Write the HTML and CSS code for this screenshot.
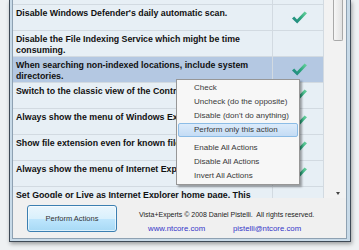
FILE: index.html
```html
<!DOCTYPE html>
<html lang="en">
<head>
  <meta charset="UTF-8">
  <title>Vista Experts</title>
  <link rel="stylesheet" href="styles.css">
</head>
<body>

  <svg width="0" height="0" class="defs">
    <defs>
      <linearGradient id="tick" x1="0" y1="1" x2="1" y2="0">
        <stop offset="0" stop-color="#1f7f86"/>
        <stop offset="0.5" stop-color="#2aa37c"/>
        <stop offset="1" stop-color="#6fd8a0"/>
      </linearGradient>
      <symbol id="check" viewBox="0 0 15 13">
        <polygon points="0,7.5 2.2,5.6 5,8.4 12.6,0.4 15,2.2 5.2,12.6" fill="url(#tick)"/>
      </symbol>
    </defs>
  </svg>

  <div class="window">
    <div class="client">

      <!-- action list -->
      <div class="list">
        <div class="grid">
          <div class="row partial"><div class="desc"></div><div class="state"></div></div>
          <div class="row">
            <div class="desc">Disable Windows Defender's daily automatic scan.</div>
            <div class="state"><svg class="check"><use href="#check"/></svg></div>
          </div>
          <div class="row">
            <div class="desc">Disable the File Indexing Service which might be time<br>consuming.</div>
            <div class="state"></div>
          </div>
          <div class="row selected">
            <div class="desc">When searching non-indexed locations, include system<br>directories.</div>
            <div class="state"><svg class="check"><use href="#check"/></svg></div>
          </div>
          <div class="row">
            <div class="desc">Switch to the classic view of the Control Panel.</div>
            <div class="state"><svg class="check"><use href="#check"/></svg></div>
          </div>
          <div class="row">
            <div class="desc">Always show the menu of Windows Explorer.</div>
            <div class="state"><svg class="check"><use href="#check"/></svg></div>
          </div>
          <div class="row">
            <div class="desc">Show file extension even for known file types.</div>
            <div class="state"><svg class="check"><use href="#check"/></svg></div>
          </div>
          <div class="row">
            <div class="desc">Always show the menu of Internet Explorer.</div>
            <div class="state"><svg class="check"><use href="#check"/></svg></div>
          </div>
          <div class="row last">
            <div class="desc">Set Google or Live as Internet Explorer home page. This</div>
            <div class="state"></div>
          </div>
        </div>
        <div class="scrollbar">
          <div class="thumb"></div>
          <div class="arrow"></div>
        </div>
      </div>

      <!-- bottom bar -->
      <div class="footer">
        <button class="perform">Perform Actions</button>
        <div class="credits">
          <div>Vista+Experts &copy; 2008 Daniel Pistelli.&nbsp; All rights reserved.</div>
          <div class="links">
            <a href="#" class="site">www.ntcore.com</a>
            <a href="#">pistelli@ntcore.com</a>
          </div>
        </div>
      </div>

    </div>
  </div>

  <!-- context menu -->
  <ul class="menu">
    <li>Check</li>
    <li>Uncheck (do the opposite)</li>
    <li>Disable (don't do anything)</li>
    <li class="hot">Perform only this action</li>
    <li class="sep"></li>
    <li>Enable All Actions</li>
    <li>Disable All Actions</li>
    <li>Invert All Actions</li>
  </ul>

</body>
</html>
```

FILE: styles.css
```css
body {
  margin: 0;
  padding: 0;
  background-color: #eef1f3;
  font-family: "Liberation Sans", Arial, sans-serif;
  width: 359px;
  height: 250px;
  overflow: hidden;
}

.defs {
  position: absolute;
}

.window {
  box-sizing: border-box;
  margin-left: 9px;
  width: 342px;
  height: 242px;
  padding: 0 3px 3px 2px;
  background-color: #c8dae8;
  border: 1px solid #3e4a56;
  border-top: none;
  box-shadow: 1px 2px 4px rgba(0, 0, 0, 0.35);
}

.client {
  height: 238px;
  background-color: #f0f0f0;
  border: 1px solid #8ea1b2;
  border-top: none;
  display: flex;
  flex-direction: column;
}

.list {
  display: flex;
  height: 198px;
  overflow: hidden;
}

.grid {
  width: 311px;
  overflow: hidden;
}

.row {
  display: grid;
  grid-template-columns: 260px 51px;
  height: 26px;
  box-sizing: border-box;
  background-color: #e7eff5;
  border-bottom: 1px solid #d2dae1;
}

.row.partial {
  height: 5px;
}

.row.last {
  height: 12px;
  border-bottom: none;
}

.row.selected {
  background-color: #b4c8e2;
}

.desc {
  border-right: 1px solid #d2dae1;
  padding: 3px 3px 0 3px;
  font-size: 8.8px;
  line-height: 11px;
  font-weight: bold;
  color: #111;
  white-space: nowrap;
  overflow: hidden;
}

.state {
  border-right: 1px solid #d2dae1;
  display: flex;
  align-items: center;
  justify-content: center;
  padding-left: 2px;
}

.check {
  width: 15px;
  height: 13px;
}

.scrollbar {
  flex: 1;
  position: relative;
  background-color: #f2f2f2;
}

.thumb {
  margin-left: 9px;
  width: 10px;
  height: 41px;
  box-sizing: border-box;
  border: 1px solid #a9a9a9;
  border-top: none;
  border-radius: 0 0 2px 2px;
  background: linear-gradient(to right, #f6f6f6, #e2e2e2);
}

.arrow {
  position: absolute;
  left: 12px;
  top: 192px;
  width: 0;
  height: 0;
  border-left: 2.5px solid transparent;
  border-right: 2.5px solid transparent;
  border-top: 3px solid #444;
}

.footer {
  flex: 1;
  display: flex;
  padding: 7px 0 0 14px;
}

.perform {
  width: 90px;
  height: 27px;
  padding: 0;
  font-family: "Liberation Sans", Arial, sans-serif;
  font-size: 7.5px;
  color: #333;
  border: 1px solid #3c7fb1;
  border-radius: 3px;
  background: linear-gradient(to bottom, #eaf6fd 0%, #d9f0fc 50%, #bee6fd 51%, #a7d9f5 100%);
  box-shadow: inset 0 0 0 1px rgba(255, 255, 255, 0.6);
}

.credits {
  margin-left: 22px;
  padding-top: 3px;
  font-size: 7px;
  line-height: 14px;
  color: #222;
}

.links {
  display: flex;
  padding-left: 9px;
}

.links a {
  color: #3535c8;
  text-decoration: none;
  font-size: 7.8px;
}

.links a.site {
  width: 85px;
}

.menu {
  position: absolute;
  left: 176px;
  top: 79px;
  width: 124px;
  box-sizing: border-box;
  margin: 0;
  padding: 1px;
  list-style: none;
  background-color: #f7f7f7;
  border: 1px solid #979797;
  box-shadow: 2px 2px 2px rgba(0, 0, 0, 0.35);
}

.menu li {
  height: 14px;
  line-height: 14px;
  padding-left: 16px;
  font-size: 8px;
  color: #3a3a3a;
  box-sizing: border-box;
  white-space: nowrap;
}

.menu li.hot {
  border: 1px solid #8cbce6;
  border-radius: 2px;
  line-height: 12px;
  padding-left: 15px;
  background: linear-gradient(to bottom, #dcebfb, #c4dcf5);
}

.menu li.sep {
  height: 4px;
}
```
